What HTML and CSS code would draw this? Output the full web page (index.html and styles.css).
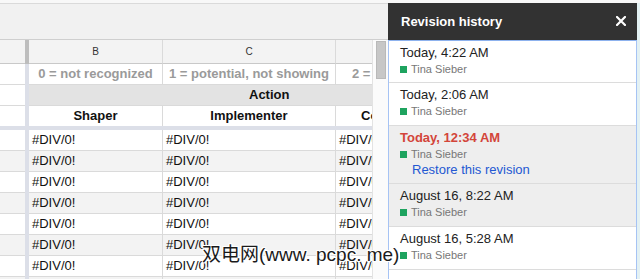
FILE: index.html
```html
<!DOCTYPE html>
<html>
<head>
<meta charset="utf-8">
<link rel="stylesheet" href="styles.css">
</head>
<body>
<div class="app">
  <div class="topstrip"></div>
  <div class="main">
    <div class="sheet">
      <div class="toolbar"></div>
      <div class="gridwrap">
        <div class="grid">
          <div class="row letters">
            <div class="c rh"></div><div class="fz dark"></div>
            <div class="c">B</div><div class="c">C</div><div class="c">D</div>
          </div>
          <div class="row">
            <div class="c rh"></div><div class="fz"></div>
            <div class="c legend ctr">0 = not recognized</div>
            <div class="c legend ctr">1 = potential, not showing</div>
            <div class="c legend lead-d">2 = showing</div>
          </div>
          <div class="row">
            <div class="c rh"></div><div class="fz"></div>
            <div class="c band">Action</div>
          </div>
          <div class="row last">
            <div class="c rh"></div><div class="fz"></div>
            <div class="c bold ctr">Shaper</div>
            <div class="c bold ctr">Implementer</div>
            <div class="c bold head-d">Completer</div>
          </div>
          <div class="hsep"></div>
          <div class="row data"><div class="c rh"></div><div class="fz"></div><div class="c">#DIV/0!</div><div class="c">#DIV/0!</div><div class="c">#DIV/0!</div></div>
          <div class="row data alt"><div class="c rh"></div><div class="fz"></div><div class="c">#DIV/0!</div><div class="c">#DIV/0!</div><div class="c">#DIV/0!</div></div>
          <div class="row data"><div class="c rh"></div><div class="fz"></div><div class="c">#DIV/0!</div><div class="c">#DIV/0!</div><div class="c">#DIV/0!</div></div>
          <div class="row data alt"><div class="c rh"></div><div class="fz"></div><div class="c">#DIV/0!</div><div class="c">#DIV/0!</div><div class="c">#DIV/0!</div></div>
          <div class="row data"><div class="c rh"></div><div class="fz"></div><div class="c">#DIV/0!</div><div class="c">#DIV/0!</div><div class="c">#DIV/0!</div></div>
          <div class="row data alt"><div class="c rh"></div><div class="fz"></div><div class="c">#DIV/0!</div><div class="c">#DIV/0!</div><div class="c">#DIV/0!</div></div>
          <div class="row data"><div class="c rh"></div><div class="fz"></div><div class="c">#DIV/0!</div><div class="c">#DIV/0!</div><div class="c">#DIV/0!</div></div>
          <div class="row data alt"><div class="c rh"></div><div class="fz"></div><div class="c">#DIV/0!</div><div class="c">#DIV/0!</div><div class="c">#DIV/0!</div></div>
        </div>
        <div class="vscroll"><div class="thumb"></div></div>
      </div>
    </div>
    <aside class="panel">
      <div class="phead">
        <span class="ptitle">Revision history</span>
        <svg class="close" width="10" height="10" viewBox="0 0 10 10"><path d="M1 1L9 9M9 1L1 9" stroke="#fff" stroke-width="2.2" stroke-linecap="square"/></svg>
      </div>
      <div class="pbody">
        <div class="rev first">
          <div class="when">Today, 4:22 AM</div>
          <div class="who"><span class="sq"></span>Tina Sieber</div>
        </div>
        <div class="rev">
          <div class="when">Today, 2:06 AM</div>
          <div class="who"><span class="sq"></span>Tina Sieber</div>
        </div>
        <div class="rev sel">
          <div class="when cur">Today, 12:34 AM</div>
          <div class="who"><span class="sq"></span>Tina Sieber</div>
          <div class="restore">Restore this revision</div>
        </div>
        <div class="rev hov">
          <div class="when">August 16, 8:22 AM</div>
          <div class="who"><span class="sq"></span>Tina Sieber</div>
        </div>
        <div class="rev">
          <div class="when">August 16, 5:28 AM</div>
          <div class="who"><span class="sq"></span>Tina Sieber</div>
        </div>
      </div>
    </aside>
    <div class="edge"></div>
  </div>
  <div class="watermark">双电网(www. pcpc. me)</div>
</div>
</body>
</html>
```
FILE: styles.css
```css
* { box-sizing: border-box; }
html, body { margin: 0; padding: 0; }
body {
  width: 640px;
  height: 279px;
  overflow: hidden;
  background: #fff;
  font-family: "Liberation Sans", Arial, sans-serif;
}
.app {
  position: relative;
  width: 640px;
  height: 279px;
  display: flex;
  flex-direction: column;
}
.topstrip { height: 3px; background: #f8f8f8; }
.main { flex: 1; display: flex; min-height: 0; }

.sheet { width: 388px; display: flex; flex-direction: column; }
.toolbar {
  height: 37px;
  background: #f1f1f1;
  border-top: 1px solid #dadada;
  border-bottom: 1px solid #cfcfcf;
}
.gridwrap { flex: 1; display: flex; min-height: 0; }
.grid { width: 372px; overflow: hidden; }
.row {
  display: grid;
  grid-template-columns: 25px 4px 134px 173px 112px;
  height: 21px;
  width: 448px;
}
.c {
  border-right: 1px solid #dadada;
  border-bottom: 1px solid #dadada;
  font-size: 13px;
  line-height: 20px;
  color: #111;
  padding-left: 3px;
  white-space: nowrap;
  overflow: hidden;
}
.c.rh { border-right: none; padding: 0; }
.fz { background: #dcdfe8; }
.fz.dark { background: #bdbdbd; }
.letters { height: 24px; }
.letters .c {
  background: #f3f3f3;
  border-bottom-color: #c9c9c9;
  font-size: 10px;
  line-height: 23px;
  text-align: center;
  color: #333;
  padding: 0;
}
.ctr { text-align: center; padding: 0; }
.lead-d { padding-left: 16px; }
.head-d { padding-left: 25px; }
.legend { color: #9a9a9a; font-weight: bold; }
.bold { font-weight: bold; color: #111; }
.band {
  grid-column: 3 / span 3;
  background: #e3e3e3;
  font-weight: bold;
  border-right: none;
  padding-left: 220px;
}
.row.last { height: 20px; }
.row.last .c { border-bottom: none; }
.hsep { height: 4px; background: #dcdfe8; width: 448px; }
.data .c { padding-left: 3px; }
.data.alt .c { background: #f3f3f3; }
.vscroll {
  width: 16px;
  background: #fbfbfb;
  border-left: 1px solid #e3e3e3;
  padding: 1px 2px 0 3px;
}
.thumb {
  height: 38px;
  background: #c7c7c7;
  border: 1px solid #b9b9b9;
}

.panel { width: 249px; display: flex; flex-direction: column; }
.phead {
  height: 37px;
  background: #323232;
  display: flex;
  align-items: center;
  justify-content: space-between;
  padding: 0 11px 0 13px;
}
.ptitle { color: #fff; font-weight: bold; font-size: 13px; }
.close { display: block; margin-top: -2px; }
.pbody {
  flex: 1;
  border-top: 1px solid #8db2ee;
  border-left: 1px solid #a6c3f4;
  border-right: 1px solid #a6c3f4;
  background: #fff;
}
.rev {
  padding: 3px 11px 7px;
  border-bottom: 1px solid #dcdcdc;
}
.rev.first { padding-bottom: 6px; }
.rev.sel { background: #eeeeee; padding-bottom: 5px; }
.rev.hov { background: #eeeeee; }
.when { font-size: 13px; line-height: 18px; color: #222; }
.when.cur { color: #d3453a; font-weight: bold; }
.who {
  display: flex;
  align-items: center;
  font-size: 11px;
  line-height: 14px;
  color: #777;
}
.sq {
  width: 7px;
  height: 7px;
  background: #1ea35f;
  margin-right: 4px;
  flex: none;
}
.restore {
  font-size: 13px;
  line-height: 17px;
  color: #2358d2;
  margin-left: 12px;
}
.edge { width: 3px; background: #e3f1f3; }

.watermark {
  position: absolute;
  left: 202px;
  top: 244px;
  font-family: "Liberation Sans", "Noto Sans CJK SC", sans-serif;
  font-size: 19px;
  line-height: 22px;
  color: #1a1a1a;
  white-space: nowrap;
  text-shadow: 1px 0 #fff, -1px 0 #fff, 0 1px #fff, 0 -1px #fff,
               1px 1px #fff, -1px -1px #fff, 1px -1px #fff, -1px 1px #fff;
}
```
